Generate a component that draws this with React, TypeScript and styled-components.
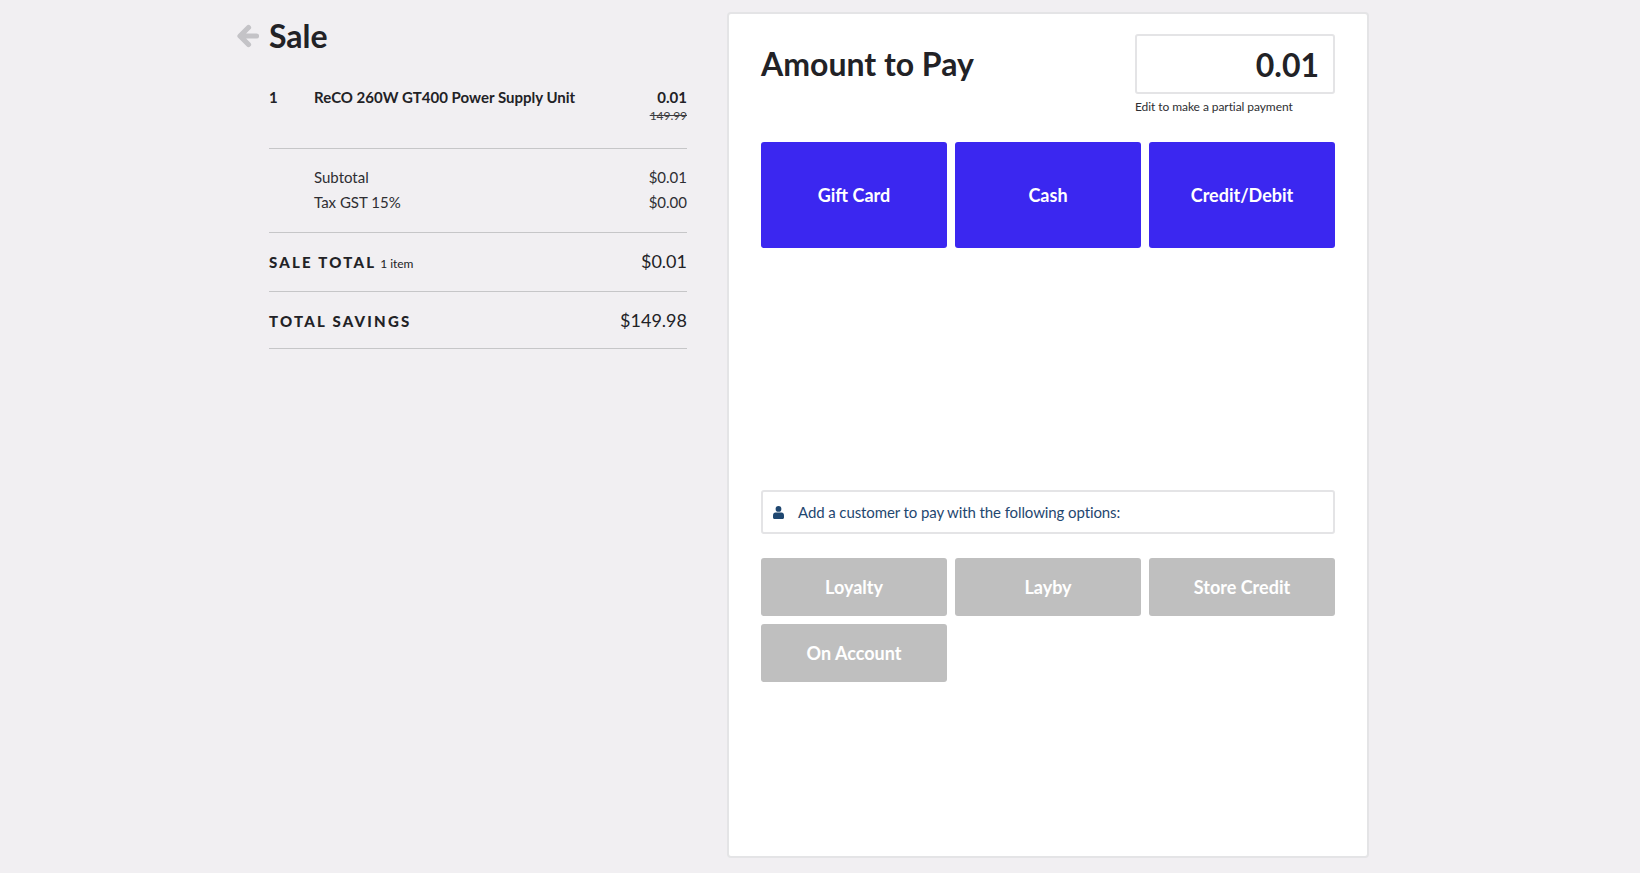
import React from 'react';
import styled, { createGlobalStyle } from 'styled-components';

const GlobalStyle = createGlobalStyle`
  html, body {
    margin: 0;
    padding: 0;
    height: 100%;
    background: #f1eff2;
    color: #222226;
    font-family: Lato, "Open Sans", sans-serif;
  }
`;

const Page = styled.div`
  display: flex;
  align-items: flex-start;
  padding: 12px 0 15px 237px;
  height: 873px;
  box-sizing: border-box;
`;

const SaleColumn = styled.section`
  width: 450px;
  flex-shrink: 0;
  padding-top: 2px;
`;

const SaleHeader = styled.header`
  display: flex;
  align-items: center;
  height: 44px;
  margin-bottom: 20px;
`;

const BackIcon = styled.svg`
  width: 22px;
  height: 24px;
  margin-right: 10px;
  fill: none;
  stroke: #c4c3c7;
  stroke-width: 5.2;
  stroke-linecap: round;
  stroke-linejoin: round;
`;

const SaleTitle = styled.h1`
  margin: 0;
  font-size: 32px;
  font-weight: 700;
  line-height: 44px;
`;

const Rows = styled.div`
  margin-left: 32px;
`;

const Section = styled.div<{ $height: number }>`
  height: ${(p) => p.$height}px;
  box-sizing: border-box;
  border-bottom: 1px solid #c6c6c8;
`;

const ItemRow = styled.div`
  display: grid;
  grid-template-columns: 45px 1fr auto;
  padding-top: 9px;
  font-size: 15px;
  font-weight: 700;
  line-height: 20px;
`;

const ItemPrice = styled.div`
  text-align: right;
`;

const WasPrice = styled.div`
  margin-top: 2px;
  font-size: 12px;
  font-weight: 400;
  line-height: 14px;
  letter-spacing: -0.05px;
  text-decoration: line-through;
  color: #3c3c40;
`;

const TaxRows = styled.div`
  display: grid;
  grid-template-columns: 1fr auto;
  padding: 16px 0 0 45px;
  font-size: 15px;
  line-height: 25px;
  color: #2e2e32;
`;

const TotalRow = styled.div`
  display: flex;
  justify-content: space-between;
  align-items: baseline;
  padding-top: 15px;
  line-height: 26px;
`;

const TotalLabel = styled.span`
  font-size: 15px;
  font-weight: 900;
  letter-spacing: 2.23px;
`;

const ItemCount = styled.span`
  margin-left: 4px;
  font-size: 12px;
  letter-spacing: -0.1px;
`;

const TotalValue = styled.span`
  font-size: 18px;
`;

const PayCard = styled.section`
  width: 642px;
  height: 846px;
  margin-left: 40px;
  padding: 20px 32px;
  box-sizing: border-box;
  background: #fff;
  border: 2px solid #e4e4e6;
  border-radius: 4px;
`;

const AmountRow = styled.div`
  display: flex;
  justify-content: space-between;
`;

const AmountTitle = styled.h2`
  margin: 8px 0 0;
  font-size: 32px;
  font-weight: 700;
  line-height: 44px;
`;

const AmountField = styled.div`
  width: 200px;
`;

const AmountInput = styled.input`
  display: block;
  width: 100%;
  height: 60px;
  padding: 0 14px;
  box-sizing: border-box;
  border: 2px solid #e4e4e6;
  border-radius: 3px;
  outline: none;
  font-family: inherit;
  font-size: 32px;
  font-weight: 700;
  color: #222226;
  text-align: right;
`;

const Hint = styled.div`
  margin-top: 5px;
  font-size: 12px;
  line-height: 16px;
  letter-spacing: -0.07px;
  color: #2e2e32;
`;

const ButtonGrid = styled.div`
  display: grid;
  grid-template-columns: repeat(3, 186px);
  gap: 8px;
`;

const PayButtons = styled(ButtonGrid)`
  margin-top: 27px;
`;

const PayButton = styled.button<{ $disabled?: boolean }>`
  height: ${(p) => (p.$disabled ? 58 : 106)}px;
  padding: 0;
  border: 0;
  border-radius: 3px;
  background: ${(p) => (p.$disabled ? '#bfbfbf' : '#3b27f0')};
  color: #fff;
  font-family: inherit;
  font-size: 18px;
  font-weight: 700;
`;

const CustomerNotice = styled.div`
  display: flex;
  align-items: center;
  height: 44px;
  margin-top: 242px;
  padding-left: 10px;
  box-sizing: border-box;
  border: 2px solid #e4e4e6;
  border-radius: 3px;
  font-size: 15px;
  letter-spacing: -0.1px;
  color: #1f4770;
`;

const PersonIcon = styled.svg`
  width: 11px;
  height: 13px;
  margin-right: 14px;
  fill: #1f4770;
`;

const CustomerButtons = styled(ButtonGrid)`
  margin-top: 24px;
`;

export default function App() {
  return (
    <>
      <GlobalStyle />
      <Page>
        <SaleColumn>
          <SaleHeader>
            <BackIcon viewBox="0 0 22 24">
              <path d="M19.500 12H4M11.500 3.500 3 12l8.500 8.500" />
            </BackIcon>
            <SaleTitle>Sale</SaleTitle>
          </SaleHeader>
          <Rows>
            <Section $height={71}>
              <ItemRow>
                <div>1</div>
                <div>ReCO 260W GT400 Power Supply Unit</div>
                <ItemPrice>
                  0.01
                  <WasPrice>149.99</WasPrice>
                </ItemPrice>
              </ItemRow>
            </Section>
            <Section $height={84}>
              <TaxRows>
                <div>Subtotal</div>
                <div>$0.01</div>
                <div>Tax GST 15%</div>
                <div>$0.00</div>
              </TaxRows>
            </Section>
            <Section $height={59}>
              <TotalRow>
                <div>
                  <TotalLabel>SALE TOTAL</TotalLabel>
                  <ItemCount>1 item</ItemCount>
                </div>
                <TotalValue>$0.01</TotalValue>
              </TotalRow>
            </Section>
            <Section $height={57}>
              <TotalRow>
                <TotalLabel>TOTAL SAVINGS</TotalLabel>
                <TotalValue>$149.98</TotalValue>
              </TotalRow>
            </Section>
          </Rows>
        </SaleColumn>
        <PayCard>
          <AmountRow>
            <AmountTitle>Amount to Pay</AmountTitle>
            <AmountField>
              <AmountInput defaultValue="0.01" />
              <Hint>Edit to make a partial payment</Hint>
            </AmountField>
          </AmountRow>
          <PayButtons>
            <PayButton>Gift Card</PayButton>
            <PayButton>Cash</PayButton>
            <PayButton>Credit/Debit</PayButton>
          </PayButtons>
          <CustomerNotice>
            <PersonIcon viewBox="0 0 11 13">
              <circle cx="5.500" cy="2.900" r="2.900" />
              <path d="M0 11.500v-2C0 7.500 1 6.500 2.500 6.500h6C10 6.500 11 7.500 11 9.500v2c0 .9-.6 1.500-1.500 1.500h-8C.6 13 0 12.400 0 11.500Z" />
            </PersonIcon>
            Add a customer to pay with the following options:
          </CustomerNotice>
          <CustomerButtons>
            <PayButton $disabled>Loyalty</PayButton>
            <PayButton $disabled>Layby</PayButton>
            <PayButton $disabled>Store Credit</PayButton>
            <PayButton $disabled>On Account</PayButton>
          </CustomerButtons>
        </PayCard>
      </Page>
    </>
  );
}
